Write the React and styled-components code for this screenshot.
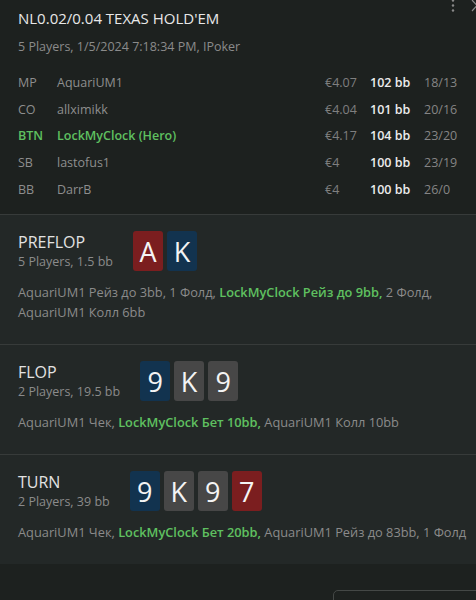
import styled, { createGlobalStyle } from 'styled-components';

const GlobalStyle = createGlobalStyle`
  html, body {
    margin: 0;
    padding: 0;
    background: #1d211f;
    overflow: hidden;
  }
  body {
    font-family: "Open Sans", "Noto Sans", sans-serif;
    color: #e6e6e6;
  }
`;

const players = [
  { pos: 'MP', name: 'AquariUM1', stack: '€4.07', bb: '102 bb', stats: '18/13' },
  { pos: 'CO', name: 'allximikk', stack: '€4.04', bb: '101 bb', stats: '20/16' },
  { pos: 'BTN', name: 'LockMyClock (Hero)', stack: '€4.17', bb: '104 bb', stats: '23/20', hero: true },
  { pos: 'SB', name: 'lastofus1', stack: '€4', bb: '100 bb', stats: '23/19' },
  { pos: 'BB', name: 'DarrB', stack: '€4', bb: '100 bb', stats: '26/0' },
];

const streets = [
  {
    name: 'PREFLOP',
    info: '5 Players, 1.5 bb',
    cards: [['A', 'red'], ['K', 'blue']],
    actions: [
      { text: 'AquariUM1 Рейз до 3bb, 1 Фолд, ' },
      { text: 'LockMyClock Рейз до 9bb,', hero: true },
      { text: ' 2 Фолд, AquariUM1 Колл 6bb' },
    ],
  },
  {
    name: 'FLOP',
    info: '2 Players, 19.5 bb',
    cards: [['9', 'blue'], ['K', 'gray'], ['9', 'gray']],
    actions: [
      { text: 'AquariUM1 Чек, ' },
      { text: 'LockMyClock Бет 10bb,', hero: true },
      { text: ' AquariUM1 Колл 10bb' },
    ],
  },
  {
    name: 'TURN',
    info: '2 Players, 39 bb',
    cards: [['9', 'blue'], ['K', 'gray'], ['9', 'gray'], ['7', 'red']],
    actions: [
      { text: 'AquariUM1 Чек, ' },
      { text: 'LockMyClock Бет 20bb,', hero: true },
      { text: ' AquariUM1 Рейз до 83bb, 1 Фолд' },
    ],
  },
];

const cardColors = {
  red: '#7b1e1f',
  blue: '#12334f',
  gray: '#474747',
};

function App() {
  return (
    <Page>
      <GlobalStyle />
      <WindowTools>
        <svg width="4" height="14" viewBox="0 0 4 14">
          <circle cx="2" cy="1.5" r="1.2" fill="#8a8a8a" />
          <circle cx="2" cy="6.5" r="1.2" fill="#8a8a8a" />
          <circle cx="2" cy="11.5" r="1.2" fill="#8a8a8a" />
        </svg>
        <svg width="12" height="14" viewBox="0 0 12 14">
          <path d="M1 1 L11 12 M11 1 L1 12" stroke="#8a8a8a" strokeWidth="1.2" />
        </svg>
      </WindowTools>

      <Summary>
        <Title>NL0.02/0.04 TEXAS HOLD'EM</Title>
        <SubTitle>5 Players, 1/5/2024 7:18:34 PM, IPoker</SubTitle>
        <PlayerTable>
          {players.map((p) => (
            <PlayerRow key={p.pos}>
              <Pos $hero={p.hero}>{p.pos}</Pos>
              <Name $hero={p.hero}>{p.name}</Name>
              <Stack>{p.stack}</Stack>
              <BB>{p.bb}</BB>
              <Stats>{p.stats}</Stats>
            </PlayerRow>
          ))}
        </PlayerTable>
      </Summary>

      {streets.map((s) => (
        <Street key={s.name}>
          <StreetHead>
            <StreetLabel>
              <StreetName>{s.name}</StreetName>
              <StreetInfo>{s.info}</StreetInfo>
            </StreetLabel>
            <Cards>
              {s.cards.map(([rank, color], i) => (
                <Card key={i} $color={cardColors[color]}>{rank}</Card>
              ))}
            </Cards>
          </StreetHead>
          <Actions>
            {s.actions.map((a, i) => (
              <Action key={i} $hero={a.hero}>{a.text}</Action>
            ))}
          </Actions>
        </Street>
      ))}

      <Footer>
        <OutlineButton />
      </Footer>
    </Page>
  );
}

export default App;

const Page = styled.div`
  position: relative;
  width: 476px;
  min-height: 600px;
  background: #1d211f;
`;

const WindowTools = styled.div`
  position: absolute;
  top: -1px;
  right: -7px;
  display: flex;
  gap: 16px;
  align-items: flex-start;
`;

const Summary = styled.div`
  padding: 6px 8px 12px 18px;
`;

const Title = styled.div`
  font-size: 15px;
  line-height: 24px;
  color: #e8e8e8;
`;

const SubTitle = styled.div`
  font-size: 12.5px;
  line-height: 18px;
  margin-top: 8px;
  color: #8b8b8b;
`;

const PlayerTable = styled.div`
  margin-top: 13px;
  display: flex;
  flex-direction: column;
`;

const PlayerRow = styled.div`
  display: grid;
  grid-template-columns: 39px 1fr 45px 54px 44px;
  height: 26.7px;
  align-items: center;
  font-size: 12.5px;
`;

const Pos = styled.span`
  color: ${(p) => (p.$hero ? '#5fc060' : '#8e8e8e')};
  font-weight: ${(p) => (p.$hero ? 600 : 400)};
`;

const Name = styled(Pos)``;

const Stack = styled.span`
  color: #7f7f7f;
`;

const BB = styled.span`
  color: #ececec;
  font-weight: 600;
`;

const Stats = styled.span`
  color: #858585;
`;

const Street = styled.section`
  background: #232827;
  border-top: 1px solid #373b3a;
  padding: 16px 8px 22px 18px;
`;

const StreetHead = styled.div`
  display: flex;
  align-items: center;
  gap: 20px;
`;

const StreetLabel = styled.div`
  display: flex;
  flex-direction: column;
`;

const StreetName = styled.div`
  font-size: 16px;
  line-height: 22px;
  color: #e2e2e2;
`;

const StreetInfo = styled.div`
  font-size: 12.5px;
  line-height: 18px;
  color: #8b8b8b;
`;

const Cards = styled.div`
  display: flex;
  gap: 4px;
`;

const Card = styled.div`
  width: 30px;
  height: 40px;
  border-radius: 3px;
  background: ${(p) => p.$color};
  color: #f4f4f4;
  font-size: 27px;
  display: flex;
  align-items: center;
  justify-content: center;
`;

const Actions = styled.div`
  margin-top: 11px;
  font-size: 12.8px;
  line-height: 20px;
  color: #8b8b8b;
`;

const Action = styled.span`
  color: ${(p) => (p.$hero ? '#5fc060' : 'inherit')};
  font-weight: ${(p) => (p.$hero ? 600 : 400)};
`;

const Footer = styled.div`
  display: flex;
  justify-content: flex-end;
  padding-top: 26px;
`;

const OutlineButton = styled.button`
  width: 150px;
  height: 32px;
  flex-shrink: 0;
  margin-right: -7px;
  background: transparent;
  border: 1px solid #444846;
  border-radius: 5px;
`;
